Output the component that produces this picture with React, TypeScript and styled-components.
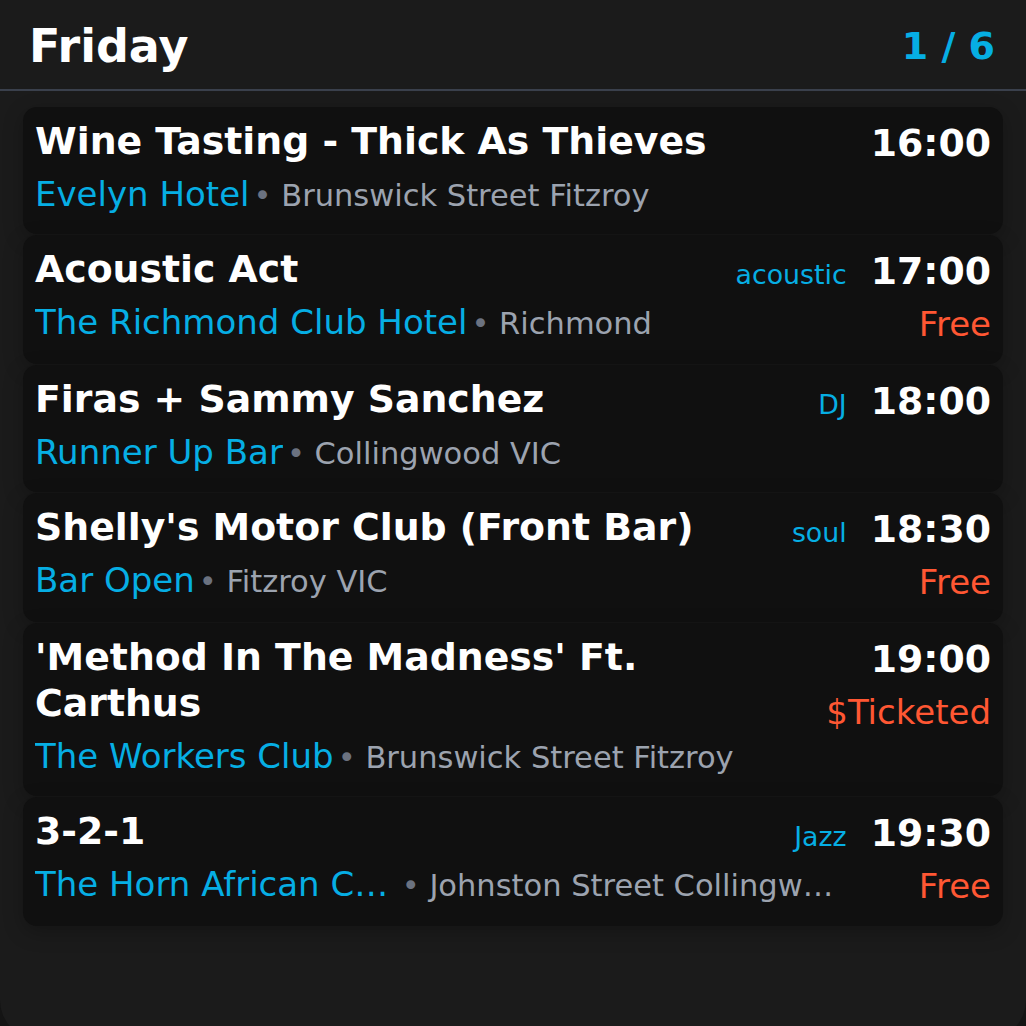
import React from "react";
import styled, { createGlobalStyle } from "styled-components";

const Global = createGlobalStyle`
  html, body {
    margin: 0;
    padding: 0;
    background: #141414;
    overflow: hidden;
  }
  body {
    font-family: "DejaVu Sans", "Liberation Sans", sans-serif;
  }
  * { box-sizing: border-box; }
`;

const Panel = styled.div`
  width: 1026px;
  height: 1040px;
  background: #1b1b1b;
  border-radius: 0 0 40px 40px;
`;

const Header = styled.header`
  display: flex;
  align-items: center;
  justify-content: space-between;
  height: 91px;
  padding: 2px 31px 0 29px;
  border-bottom: 2px solid #3a404c;
`;

const Day = styled.h1`
  margin: 0;
  font-size: 46px;
  font-weight: 700;
  color: #ffffff;
`;

const Counter = styled.span`
  font-size: 38px;
  font-weight: 700;
  color: #06aee4;
`;

const List = styled.div`
  display: flex;
  flex-direction: column;
  gap: 1px;
  padding: 16px 23px 0;
`;

const Card = styled.article`
  display: flex;
  gap: 24px;
  background: #101010;
  border-radius: 14px;
  padding: 11px 12px 20px;
  box-shadow: 0 6px 20px rgba(0, 0, 0, 0.25);
`;

const Main = styled.div`
  flex: 1;
  min-width: 0;
  display: flex;
  flex-direction: column;
`;

const TitleRow = styled.div`
  display: flex;
  align-items: flex-end;
  gap: 16px;
`;

const Title = styled.h2`
  flex: 1;
  margin: 0;
  font-size: 37.8px;
  line-height: 46px;
  font-weight: 700;
  color: #ffffff;
`;

const Tag = styled.span`
  font-size: 26.8px;
  line-height: 34px;
  color: #06aee4;
  white-space: nowrap;
`;

const VenueRow = styled.div`
  display: flex;
  align-items: baseline;
  margin-top: 10px;
  height: 40px;
  white-space: nowrap;
  min-width: 0;
`;

const Venue = styled.span`
  flex: 0 1 auto;
  min-width: 0;
  font-size: 34px;
  line-height: 40px;
  color: #06aee4;
  overflow: hidden;
  text-overflow: ellipsis;
`;

const Location = styled.span`
  flex: 0 1 auto;
  min-width: 0;
  margin-left: 4px;
  font-size: 30.5px;
  line-height: 36px;
  color: #9ca3af;
  overflow: hidden;
  text-overflow: ellipsis;
`;

const Dot = styled.span`
  color: #6b7280;
`;

const Side = styled.div`
  flex-shrink: 0;
  display: flex;
  flex-direction: column;
  align-items: flex-end;
  padding-top: 2px;
`;

const Time = styled.span`
  font-size: 37.8px;
  line-height: 46px;
  font-weight: 700;
  color: #ffffff;
`;

const Price = styled.span`
  margin-top: 10px;
  font-size: 34px;
  line-height: 40px;
  color: #ff5733;
  white-space: nowrap;
`;

type Gig = {
  title: string;
  tag?: string;
  time: string;
  venue: string;
  location: string;
  price?: string;
};

const gigs: Gig[] = [
  {
    title: "Wine Tasting - Thick As Thieves",
    time: "16:00",
    venue: "Evelyn Hotel",
    location: "Brunswick Street Fitzroy",
  },
  {
    title: "Acoustic Act",
    tag: "acoustic",
    time: "17:00",
    venue: "The Richmond Club Hotel",
    location: "Richmond",
    price: "Free",
  },
  {
    title: "Firas + Sammy Sanchez",
    tag: "DJ",
    time: "18:00",
    venue: "Runner Up Bar",
    location: "Collingwood VIC",
  },
  {
    title: "Shelly's Motor Club (Front Bar)",
    tag: "soul",
    time: "18:30",
    venue: "Bar Open",
    location: "Fitzroy VIC",
    price: "Free",
  },
  {
    title: "'Method In The Madness' Ft. Carthus",
    time: "19:00",
    venue: "The Workers Club",
    location: "Brunswick Street Fitzroy",
    price: "$Ticketed",
  },
  {
    title: "3-2-1",
    tag: "Jazz",
    time: "19:30",
    venue: "The Horn African Cafe",
    location: "Johnston Street Collingwood",
    price: "Free",
  },
];

export default function App() {
  return (
    <>
      <Global />
      <Panel>
        <Header>
          <Day>Friday</Day>
          <Counter>1 / 6</Counter>
        </Header>
        <List>
          {gigs.map((g) => (
            <Card key={g.title}>
              <Main>
                <TitleRow>
                  <Title>{g.title}</Title>
                  {g.tag && <Tag>{g.tag}</Tag>}
                </TitleRow>
                <VenueRow>
                  <Venue>{g.venue}</Venue>
                  <Location>
                    <Dot>•</Dot> {g.location}
                  </Location>
                </VenueRow>
              </Main>
              <Side>
                <Time>{g.time}</Time>
                {g.price && <Price>{g.price}</Price>}
              </Side>
            </Card>
          ))}
        </List>
      </Panel>
    </>
  );
}
